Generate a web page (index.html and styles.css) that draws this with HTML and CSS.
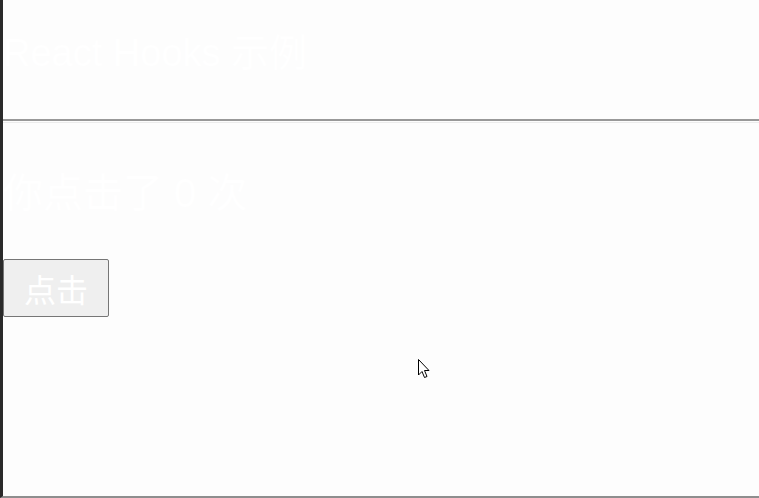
FILE: index.html
```html
<!DOCTYPE html>
<html lang="zh">
<head>
<meta charset="utf-8">
<title>React Hooks 示例</title>
<link rel="stylesheet" href="styles.css">
</head>
<body>
<div class="frame">
  <header class="header">
    <h1 class="title">React Hooks 示例</h1>
  </header>
  <hr class="rule">
  <main class="content">
    <p class="count">你点击了 0 次</p>
    <button class="btn" type="button">点击</button>
  </main>
  <svg class="cursor" width="14" height="22" viewBox="0 0 14 22" aria-hidden="true">
    <path d="M1.5 1.5 L1.5 17 L5 13.5 L7.5 19.5 L10 18.5 L7.5 12.5 L12 12.5 Z" fill="#fff" stroke="#000" stroke-width="1" stroke-linejoin="miter"/>
  </svg>
</div>
</body>
</html>
```
FILE: styles.css
```css
html, body {
  margin: 0;
  padding: 0;
  background: #fdfdfd;
}
.frame {
  position: relative;
  height: 498px;
  box-sizing: border-box;
  border-left: 3px solid #2a2a2a;
  border-bottom: 2px solid #8e8e8e;
  background: #fdfdfd;
  font-family: "Liberation Sans", "Noto Sans CJK SC", sans-serif;
  color: #ffffff;
  overflow: hidden;
}
.header {
  height: 119px;
  box-sizing: border-box;
  padding-top: 30px;
}
.title {
  margin: 0;
  font-size: 38px;
  font-weight: normal;
  line-height: 46px;
}
.rule {
  margin: 0;
  border: 0;
  border-top: 2px solid #999999;
  border-bottom: 1px solid #ececec;
  height: 1px;
  background: #fdfdfd;
}
.content {
  padding-top: 47px;
}
.count {
  margin: 0;
  font-size: 40px;
  line-height: 46px;
}
.btn {
  display: block;
  margin-top: 43px;
  width: 106px;
  height: 58px;
  padding: 0;
  border: 1px solid #767676;
  border-radius: 2px;
  background: #efefef;
  color: #ffffff;
  font-family: "Noto Sans CJK SC", sans-serif;
  font-size: 32px;
  line-height: 1;
}
.cursor {
  position: absolute;
  left: 414px;
  top: 358px;
}
```
